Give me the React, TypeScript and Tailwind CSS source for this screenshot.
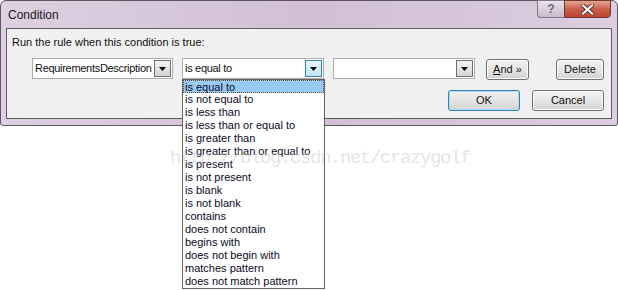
import React from 'react';

const OPS = [
  'is equal to',
  'is not equal to',
  'is less than',
  'is less than or equal to',
  'is greater than',
  'is greater than or equal to',
  'is present',
  'is not present',
  'is blank',
  'is not blank',
  'contains',
  'does not contain',
  'begins with',
  'does not begin with',
  'matches pattern',
  'does not match pattern',
];

function Arrow() {
  return (
    <svg width="7" height="4" viewBox="0 0 7 4">
      <path d="M0 0h7L3.5 4z" fill="#000" />
    </svg>
  );
}

function DropButton({ hot }: { hot?: boolean }) {
  return (
    <div
      className={`absolute right-[1px] top-[1px] w-[17px] h-[17px] flex items-center justify-center border ${
        hot
          ? 'border-[#3c7fb1] bg-gradient-to-b from-[#eaf6fd] to-[#bee6fd]'
          : 'border-[#707070] bg-gradient-to-b from-[#f2f2f2] to-[#d4d4d4]'
      }`}
    >
      <Arrow />
    </div>
  );
}

function Combo({ text, hot, width }: { text?: string; hot?: boolean; width: string }) {
  return (
    <div className={`relative h-[21px] ${width} border border-[#abadb3] bg-white pl-[2px] leading-[19px] text-[11px] text-[#111]`}>
      <div className="overflow-hidden whitespace-nowrap tracking-[-0.3px] pr-[19px]">{text}</div>
      <DropButton hot={hot} />
    </div>
  );
}

function Button({ children, def, width }: { children: React.ReactNode; def?: boolean; width: string }) {
  return (
    <div
      className={`h-[21px] ${width} rounded-[3px] border flex items-center justify-center text-[11px] text-[#111] ${
        def
          ? 'border-[#3c7fb1] shadow-[inset_0_0_0_1px_#a6dcf6] bg-gradient-to-b from-[#f2f2f2] via-[#e4e4e4] to-[#d5d5d5]'
          : 'border-[#707070] shadow-[inset_0_0_0_1px_#fcfcfc] bg-gradient-to-b from-[#f2f2f2] via-[#e6e6e6] to-[#d2d2d2]'
      }`}
    >
      {children}
    </div>
  );
}

export default function App() {
  return (
    <div className="relative w-[618px] h-[290px] bg-white overflow-hidden font-['Liberation_Sans',Arial,sans-serif]">
      {/* window */}
      <div className="relative w-[618px] h-[126px] rounded-t-[6px] rounded-b-[3px] border border-[#5b5560] bg-gradient-to-r from-[#ddd0e1] via-[#d2bfd5] to-[#dccde0] px-[5px] pb-[6px]">
        <div className="h-[27px] flex items-center pl-[2px] text-[12px] text-[#1a1a1a]">Condition</div>

        <div className="absolute top-[-1px] right-[6px] flex h-[18px]">
          <div className="w-[27px] rounded-bl-[4px] border border-[#7f7a85] border-r-0 bg-gradient-to-b from-[#ece4ee] to-[#c9b9cc] flex items-center justify-center text-[12px] font-bold text-[#6a6a6a]">
            ?
          </div>
          <div className="w-[47px] rounded-br-[4px] border border-[#6b3a36] bg-gradient-to-b from-[#e8a493] via-[#c95f4c] to-[#c0442e] flex items-center justify-center">
            <svg width="13" height="11" viewBox="0 0 13 11">
              <path d="M2 1.5l9 8M11 1.5l-9 8" stroke="#5a2a24" strokeWidth="4" strokeLinecap="square" />
              <path d="M2 1.5l9 8M11 1.5l-9 8" stroke="#fff" strokeWidth="2.2" strokeLinecap="square" />
            </svg>
          </div>
        </div>

        <div className="h-[91px] border border-[#5e5e5e] bg-[#f0f0f0]">
          <div className="pl-[5px] pt-[7px] text-[11px] leading-[13px] text-[#111]">Run the rule when this condition is true:</div>
          <div className="flex items-start mt-[9px] ml-[25px]">
            <Combo text="RequirementsDescription" width="w-[141px]" />
            <div className="ml-[9px]">
              <Combo text="is equal to" width="w-[142px]" hot />
            </div>
            <div className="ml-[9px]">
              <Combo width="w-[142px]" />
            </div>
            <div className="ml-[11px] mt-[1px]">
              <Button width="w-[43px]">
                <span>
                  <span className="underline">A</span>nd »
                </span>
              </Button>
            </div>
            <div className="ml-[27px] mt-[1px]">
              <Button width="w-[48px]">Delete</Button>
            </div>
          </div>
          <div className="flex justify-end gap-[12px] mt-[10px] pr-[7px]">
            <Button width="w-[72px]" def>
              OK
            </Button>
            <Button width="w-[72px]">Cancel</Button>
          </div>
        </div>
      </div>

      {/* open dropdown */}
      <div className="absolute left-[182px] top-[79px] w-[143px] h-[210px] border border-[#646464] bg-white">
        {OPS.map((op, i) => (
          <div
            key={op}
            className={`h-[13px] leading-[12px] text-[11px] text-[#0a0a1e] whitespace-nowrap ${
              i === 0 ? 'bg-[#99c9f5] border border-dotted border-[#6b4a2a] pl-[1px]' : 'pl-[2px]'
            }`}
          >
            {op}
          </div>
        ))}
      </div>

      {/* watermark */}
      <div className="absolute left-[170px] top-[144px] pointer-events-none font-['Liberation_Mono',monospace] text-[19px] tracking-[-1.4px] text-[#c4c4c4]/45 whitespace-nowrap">
        http://blog.csdn.net/crazygolf
      </div>
    </div>
  );
}
